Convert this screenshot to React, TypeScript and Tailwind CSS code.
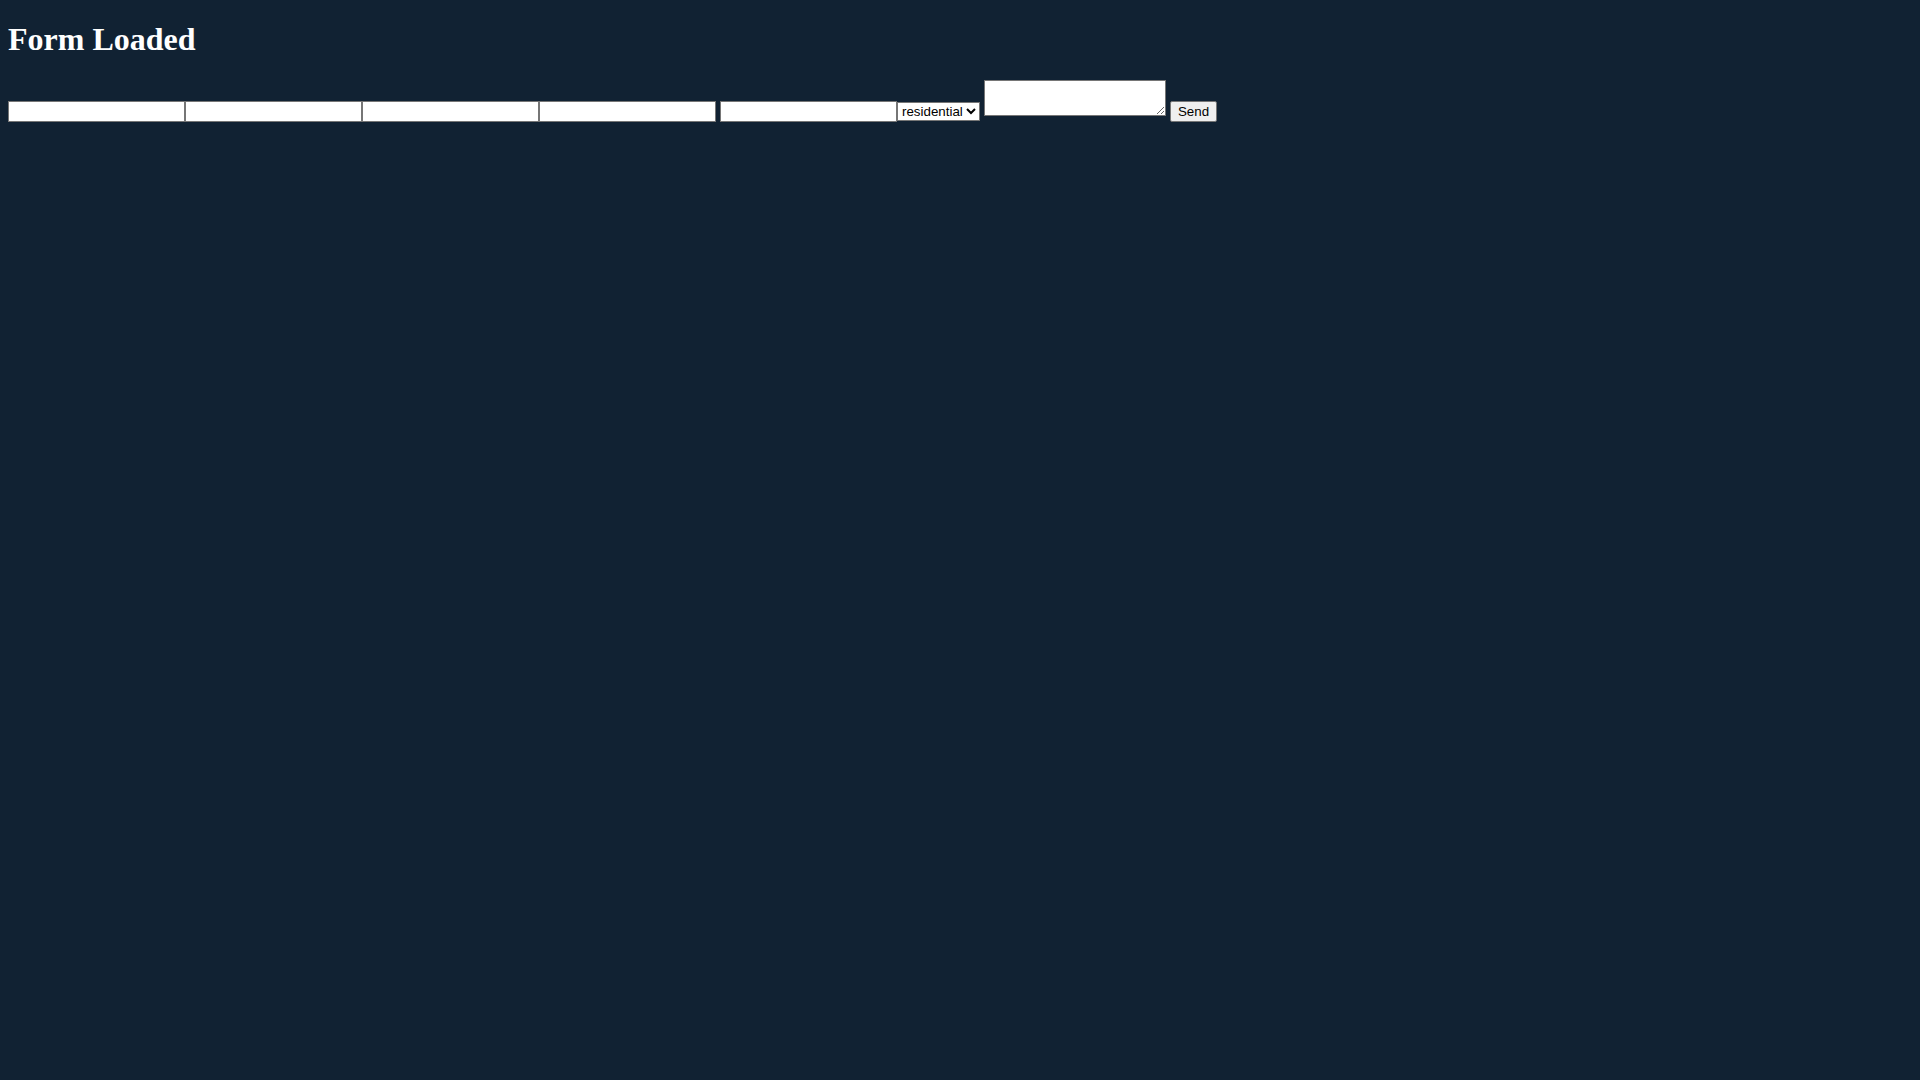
import React from "react";

export default function App() {
  const field =
    "mt-[21px] w-[177px] h-[21px] border border-[#767676] bg-white px-[2px] text-[13.33px] text-black outline-none";

  return (
    <div className="min-h-screen bg-[#112233] px-2 pt-[21px] text-white font-['Liberation_Serif',serif]">
      <h1 className="text-[32px] font-bold leading-[37px]">Form Loaded</h1>
      <form
        className="mt-[22px] flex items-start font-['Liberation_Sans',Arial,sans-serif]"
        onSubmit={(e) => e.preventDefault()}
      >
        <input type="text" className={field} />
        <input type="text" className={field} />
        <input type="text" className={field} />
        <input type="text" className={field} />
        <input type="text" className={`${field} ml-[4px]`} />
        <select
          defaultValue="residential"
          className="mt-[22px] w-[83px] h-[19px] border border-[#767676] bg-white text-[13.33px] text-black"
        >
          <option value="residential">residential</option>
          <option value="commercial">commercial</option>
        </select>
        <textarea className="ml-[4px] w-[182px] h-[36px] resize border border-[#767676] bg-white px-[2px] text-[13.33px] text-black outline-none" />
        <button
          type="submit"
          className="ml-[4px] mt-[21px] w-[47px] h-[21px] rounded-[2px] border border-[#767676] bg-[#efefef] text-[13.33px] text-black"
        >
          Send
        </button>
      </form>
    </div>
  );
}
